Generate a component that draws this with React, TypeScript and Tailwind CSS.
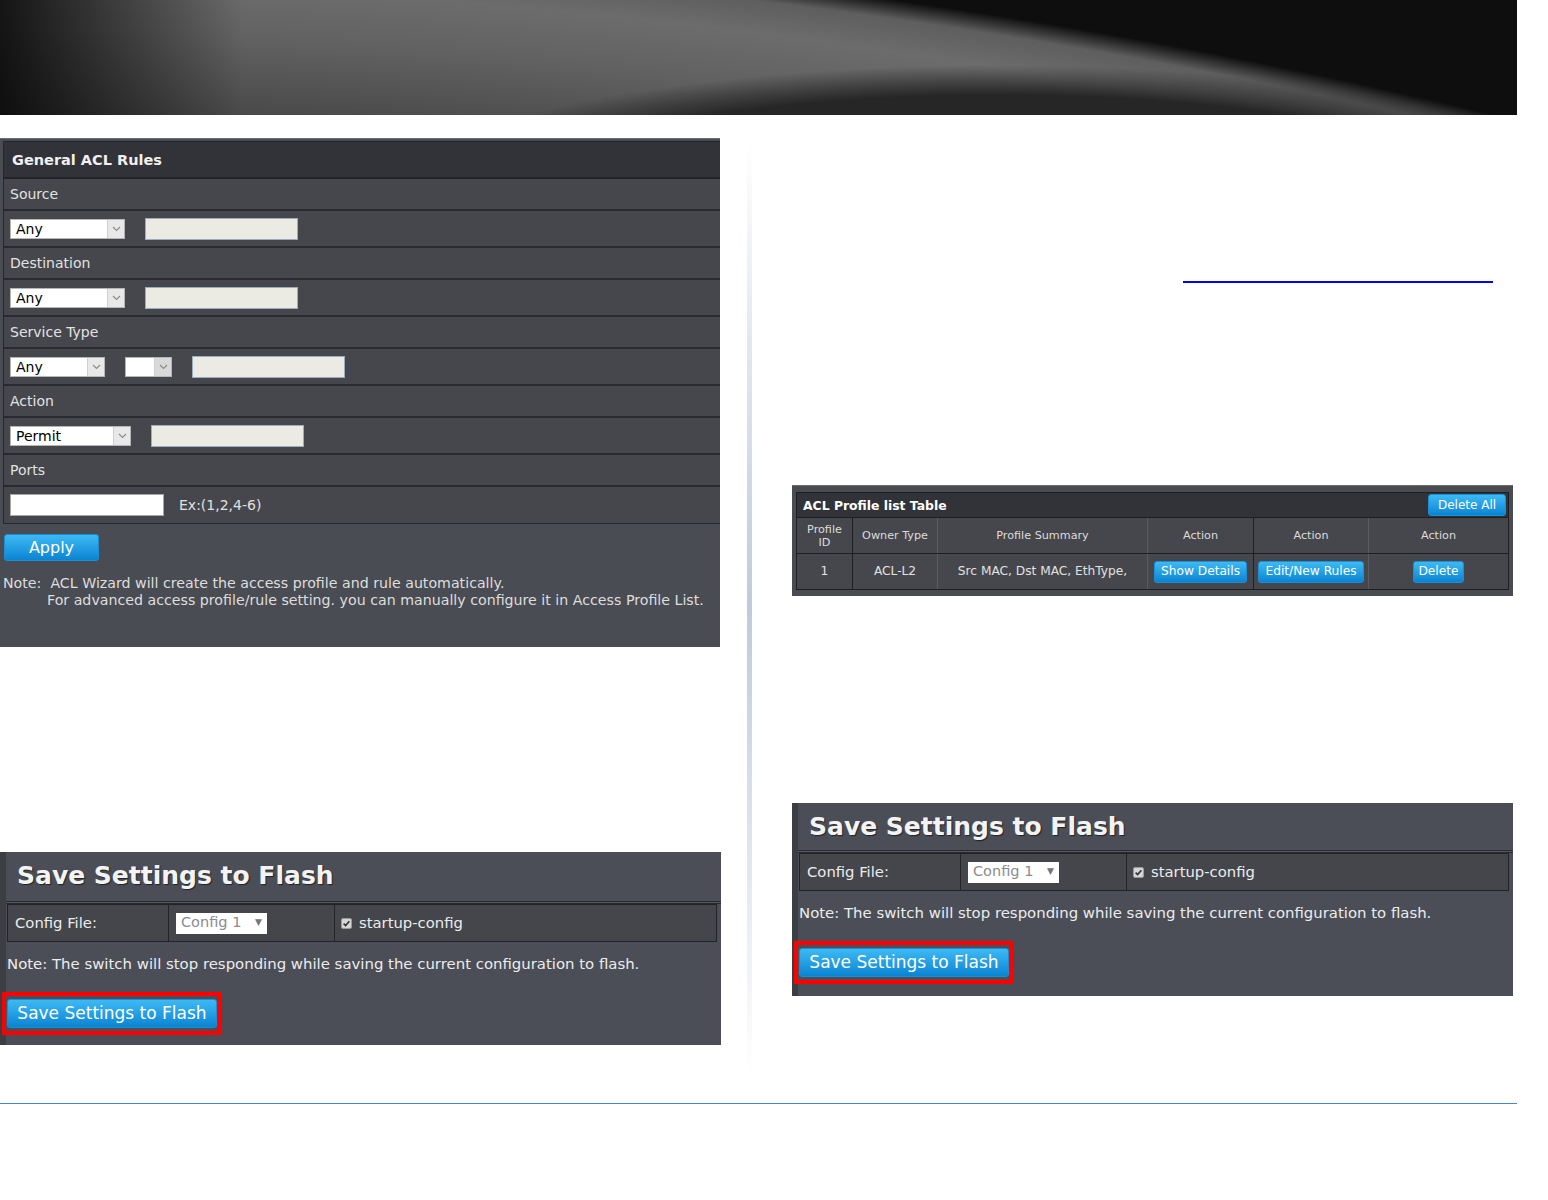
import type { ReactNode } from 'react'

const font = "font-['DejaVu_Sans',Verdana,sans-serif]"

function Chevron() {
  return (
    <svg width="9" height="6" viewBox="0 0 9 6" fill="none">
      <path d="M1 1l3.5 3.5L8 1" stroke="#8a8a8a" strokeWidth="1.1" />
    </svg>
  )
}

function Select({ value, width, disabled = false }: { value: string; width: number; disabled?: boolean }) {
  return (
    <div
      className="flex h-[20px] items-stretch border border-[#b5b5b5] bg-white"
      style={{ width }}
    >
      <span className="flex flex-1 items-center pl-[5px] text-[14px] leading-none text-black">{value}</span>
      <span
        className={
          disabled
            ? 'flex w-[17px] items-center justify-center border-l border-[#d0d0d0] bg-[#d9d9d9]'
            : 'flex w-[17px] items-center justify-center border-l border-[#cfcfcf] bg-[#e8e8e8]'
        }
      >
        <Chevron />
      </span>
    </div>
  )
}

function TextBox({ width, white = false }: { width: number; white?: boolean }) {
  return (
    <div
      className={
        white
          ? 'h-[22px] border border-[#a7a7a7] bg-white'
          : 'h-[22px] border border-[#9aaec2] bg-[#ebebe4]'
      }
      style={{ width }}
    />
  )
}

function LabelRow({ children }: { children: ReactNode }) {
  return (
    <div className="flex h-[32px] items-center border-b-2 border-[#2a2b2f] bg-[#46474c] pl-[6px] text-[14px] text-[#e2e2e2]">
      {children}
    </div>
  )
}

function InputRow({ children }: { children: ReactNode }) {
  return (
    <div className="flex h-[37px] items-center gap-[20px] border-b-2 border-[#2a2b2f] bg-[#46474c] pl-[6px]">
      {children}
    </div>
  )
}

function BlueButton({ children, className = '' }: { children: ReactNode; className?: string }) {
  return (
    <div
      className={`flex items-center justify-center rounded-[3px] border border-[#1a8fd8] bg-gradient-to-b from-[#3cbaf4] to-[#0784d2] text-white ${className}`}
    >
      {children}
    </div>
  )
}

function GeneralAclRules() {
  return (
    <div className={`h-[509px] w-[720px] border-t border-[#6c6d72] bg-[#4a4c53] pt-[2px] ${font}`}>
      <div className="ml-[3px] border-l border-t border-[#26272b]">
        <div className="flex h-[37px] items-center border-b-2 border-[#222327] bg-[#323338] pl-[8px] pt-[3px] text-[14.5px] font-bold text-[#f0f0f0]">
          General ACL Rules
        </div>
        <LabelRow>Source</LabelRow>
        <InputRow>
          <Select value="Any" width={115} />
          <TextBox width={153} />
        </InputRow>
        <LabelRow>Destination</LabelRow>
        <InputRow>
          <Select value="Any" width={115} />
          <TextBox width={153} />
        </InputRow>
        <LabelRow>Service Type</LabelRow>
        <InputRow>
          <Select value="Any" width={95} />
          <Select value="" width={47} disabled />
          <TextBox width={153} />
        </InputRow>
        <LabelRow>Action</LabelRow>
        <InputRow>
          <Select value="Permit" width={121} />
          <TextBox width={153} />
        </InputRow>
        <LabelRow>Ports</LabelRow>
        <div className="flex h-[37px] items-center gap-[15px] border-b border-[#26272b] bg-[#46474c] pl-[6px]">
          <TextBox width={154} white />
          <span className="text-[14px] text-[#e0e0e0]">Ex:(1,2,4-6)</span>
        </div>
      </div>

      <BlueButton className="ml-[4px] mt-[10px] h-[27px] w-[95px] text-[16px]">Apply</BlueButton>

      <div className="mt-[14px] pl-[3px] text-[14.2px] leading-[17px] text-[#dedede]">
        <p className="whitespace-pre">Note:  ACL Wizard will create the access profile and rule automatically.</p>
        <p className="pl-[44px]">For advanced access profile/rule setting. you can manually configure it in Access Profile List.</p>
      </div>
    </div>
  )
}

function CheckBox() {
  return (
    <svg width="11" height="11" viewBox="0 0 11 11">
      <rect x="0.5" y="0.5" width="10" height="10" rx="1.5" fill="#d6d6d6" stroke="#9a9a9a" />
      <path d="M2.6 5.6l2 2 3.8-4.4" stroke="#333" strokeWidth="1.6" fill="none" />
    </svg>
  )
}

function SaveSettings({ rowTop }: { rowTop: number }) {
  return (
    <div className={`h-[193px] w-[721px] border-l-[6px] border-[#3d3e43] bg-[#4b4e57] ${font}`}>
      <div className="flex h-[47px] items-center pl-[11px] text-[25px] font-bold text-[#f3f3f3] [text-shadow:1px_1px_1px_#222]">
        Save Settings to Flash
      </div>
      <div className="h-[3px] border-t border-b border-[#2a2b30] bg-[#55575d]" style={{ marginTop: rowTop - 50 }} />
      <div className="ml-[1px] flex h-[38px] w-[710px] border border-[#222327] bg-[#45464b] text-[14.8px] text-[#ececec]">
        <div className="flex w-[161px] items-center border-r border-[#222327] pl-[7px]">Config File:</div>
        <div className="flex w-[166px] items-center border-r border-[#222327] pl-[7px]">
          <div className="flex h-[21px] w-[91px] items-center justify-between bg-white px-[5px] text-[14.5px] text-[#8c8c8c]">
            <span>Config 1</span>
            <span className="text-[9px] text-[#777]">▼</span>
          </div>
        </div>
        <div className="flex flex-1 items-center gap-[7px] pl-[6px]">
          <CheckBox />
          <span>startup-config</span>
        </div>
      </div>
      <p className="mt-[12px] pl-[1px] text-[14.9px] leading-[20px] text-[#ececec]">
        Note: The switch will stop responding while saving the current configuration to flash.
      </p>
      <div className="ml-[-4px] mt-[18px] inline-flex border-[4px] border-[#ff0000] px-[1px] py-[3px]">
        <BlueButton className="h-[29px] w-[210px] text-[17px]">Save Settings to Flash</BlueButton>
      </div>
    </div>
  )
}

const headerCols = [
  { w: 'w-[56px]', border: 'border-[#1e1f22]' },
  { w: 'w-[85px]', border: 'border-[#5a5b60]' },
  { w: 'w-[210px]', border: 'border-[#5a5b60]' },
  { w: 'w-[106px]', border: 'border-[#1e1f22]' },
  { w: 'w-[115px]', border: 'border-[#5a5b60]' },
]

function ProfileTable() {
  const heads = ['Owner Type', 'Profile Summary', 'Action', 'Action']
  return (
    <div className={`h-[111px] w-[721px] border-t border-[#6c6d72] bg-[#4a4b51] px-[4px] pt-[6px] ${font}`}>
      <div className="border border-[#1e1f22]">
        <div className="flex h-[25px] items-center justify-between border-b border-[#1e1f22] bg-[#323338] pl-[6px] pr-[2px]">
          <span className="pt-[2px] text-[12.4px] font-bold text-white">ACL Profile list Table</span>
          <BlueButton className="h-[22px] w-[78px] text-[12px]">Delete All</BlueButton>
        </div>
        <div className="flex h-[36px] border-b border-[#1e1f22] bg-[#46474c] text-[11.2px] text-[#dcdcdc]">
          <div className={`flex flex-col items-center justify-center border-r leading-[13px] ${headerCols[0].w} ${headerCols[0].border}`}>
            <span>Profile</span>
            <span>ID</span>
          </div>
          {heads.map((h, i) => (
            <div
              key={i}
              className={`flex items-center justify-center border-r pt-[2px] ${headerCols[i + 1].w} ${headerCols[i + 1].border}`}
            >
              {h}
            </div>
          ))}
          <div className="flex flex-1 items-center justify-center pt-[2px]">Action</div>
        </div>
        <div className="flex h-[35px] bg-[#46474c] text-[12.2px] text-[#e2e2e2]">
          <div className={`flex items-center justify-center border-r ${headerCols[0].w} ${headerCols[0].border}`}>1</div>
          <div className={`flex items-center justify-center border-r ${headerCols[1].w} ${headerCols[1].border}`}>ACL-L2</div>
          <div className={`flex items-center justify-center border-r ${headerCols[2].w} ${headerCols[2].border}`}>
            Src MAC, Dst MAC, EthType,
          </div>
          <div className={`flex items-center justify-center border-r ${headerCols[3].w} ${headerCols[3].border}`}>
            <BlueButton className="h-[22px] w-[93px] text-[12.2px]">Show Details</BlueButton>
          </div>
          <div className={`flex items-center justify-center border-r ${headerCols[4].w} ${headerCols[4].border}`}>
            <BlueButton className="h-[22px] w-[106px] text-[12.2px]">Edit/New Rules</BlueButton>
          </div>
          <div className="flex flex-1 items-center justify-center">
            <BlueButton className="h-[22px] w-[51px] text-[12.2px]">Delete</BlueButton>
          </div>
        </div>
      </div>
    </div>
  )
}

export default function App() {
  return (
    <div className="h-[1200px] w-[1548px] bg-white">
      <div className="h-[115px] w-[1517px] bg-[#0d0d0d] bg-[linear-gradient(to_right,#000000cc_0%,#00000000_16%),radial-gradient(ellipse_640px_150px_at_1000px_215px,#262626_80%,#26262600_100%),radial-gradient(ellipse_3250px_1400px_at_-120px_1330px,#2c2c2c_0%,#333333_80%,#474747_87%,#626262_93%,#6c6c6c_96.5%,#5e5e5e_98.7%,#0e0e0e_100%)]" />

      <div className="flex h-[988px]">
        <div className="w-[721px] pt-[23px]">
          <GeneralAclRules />
          <div className="mt-[205px]">
            <SaveSettings rowTop={52} />
          </div>
        </div>

        <div className="ml-[26px] mt-[25px] h-[935px] w-[5px] bg-gradient-to-b from-white via-[#bfcbd8] to-white" />

        <div className="ml-[40px] w-[721px]">
          <div className="ml-[391px] mt-[166px] h-[2px] w-[310px] bg-[#0000ff]" />
          <div className="mt-[202px]">
            <ProfileTable />
          </div>
          <div className="mt-[207px]">
            <SaveSettings rowTop={50} />
          </div>
        </div>
      </div>

      <div className="h-px w-[1517px] bg-[#4a80d4]" />
    </div>
  )
}
